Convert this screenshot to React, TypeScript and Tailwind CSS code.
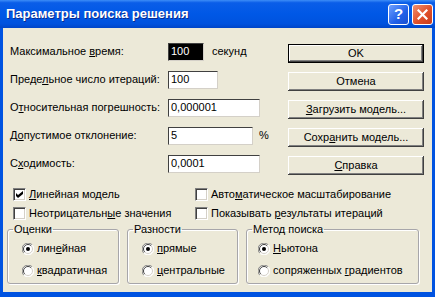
import React from "react";

const U = ({ c }: { c: string }) => <span className="underline underline-offset-[1px]">{c}</span>;

function Check({ checked }: { checked?: boolean }) {
  return (
    <span className="w-[13px] h-[13px] shrink-0 bg-white border-t border-l border-[#808080] border-r border-b border-r-white border-b-white shadow-[inset_1px_1px_0_#404040,inset_-1px_-1px_0_#D4D0C8] flex items-center justify-center">
      {checked && (
        <svg width="7" height="7" viewBox="0 0 7 7">
          <path d="M0 2 L2 4 L7 0 L7 3 L2 7 L0 5 Z" fill="#000" />
        </svg>
      )}
    </span>
  );
}

function Radio({ on }: { on?: boolean }) {
  return (
    <svg width="12" height="12" viewBox="0 0 12 12" className="shrink-0">
      <circle cx="6" cy="6" r="5.5" fill="#fff" />
      <path d="M10.2 1.8 A5.5 5.5 0 0 0 1.8 10.2" stroke="#808080" fill="none" />
      <path d="M9.2 2.8 A4.5 4.5 0 0 0 2.8 9.2" stroke="#404040" fill="none" />
      <path d="M1.8 10.2 A5.5 5.5 0 0 0 10.2 1.8" stroke="#fff" fill="none" />
      <path d="M2.8 9.2 A4.5 4.5 0 0 0 9.2 2.8" stroke="#D4D0C8" fill="none" />
      {on && <circle cx="6" cy="6" r="2" fill="#000" />}
    </svg>
  );
}

function Box({ w, children, selected }: { w: string; children: React.ReactNode; selected?: boolean }) {
  return (
    <div
      className={`${w} h-[18px] border-t border-l border-[#404040] border-r border-b border-r-[#D4D0C8] border-b-[#D4D0C8] flex items-center pl-[2px] ${
        selected ? "bg-black text-white" : "bg-white"
      }`}
    >
      {children}
    </div>
  );
}

function Btn({ children, def }: { children: React.ReactNode; def?: boolean }) {
  return (
    <div
      className={`h-[19px] w-[136px] flex items-center justify-center bg-[#ECE9D8] ${
        def
          ? "border border-black shadow-[inset_-1px_-1px_0_#404040,inset_1px_1px_0_#fff,inset_-2px_-2px_0_#808080]"
          : "shadow-[inset_-1px_-1px_0_#404040,inset_1px_1px_0_#fff,inset_-2px_-2px_0_#808080]"
      }`}
    >
      {children}
    </div>
  );
}

function Row({ label, children }: { label: React.ReactNode; children: React.ReactNode }) {
  return (
    <div className="flex items-center h-[19px]">
      <div className="w-[158px] shrink-0">{label}</div>
      {children}
    </div>
  );
}

function Opt({ on, children }: { on?: boolean; children: React.ReactNode }) {
  return (
    <div className="flex items-center gap-[3px] h-[13px]">
      <Radio on={on} />
      <span>{children}</span>
    </div>
  );
}

function Group({ title, w, pl, children }: { title: string; w: string; pl: string; children: React.ReactNode }) {
  return (
    <fieldset className={`${w} border border-[#A7A6AA] rounded-[3px] shadow-[inset_1px_1px_0_#fff,1px_1px_0_#fff] px-0`}>
      <legend className="ml-[5px] px-[1px] leading-[13px]">{title}</legend>
      <div className={`${pl} pt-[6px] pb-[6px] flex flex-col gap-[9px]`}>{children}</div>
    </fieldset>
  );
}

export default function App() {
  return (
    <div className="w-[435px] h-[297px] flex flex-col bg-[#0053E1] font-['Liberation_Sans',Arial,sans-serif] text-[11px] text-black overflow-hidden">
      <div className="h-[28px] shrink-0 flex items-center bg-[linear-gradient(to_bottom,#3D8DF7_0%,#0A5DE8_10%,#0058E6_50%,#0052DE_85%,#0045C8_100%)] pl-[6px] pr-[2px]">
        <div className="flex-1 text-white font-bold text-[13px] [text-shadow:1px_1px_0_#0B2C8F]">
          Параметры поиска решения
        </div>
        <div className="flex gap-[3px]">
          <div className="w-[21px] h-[21px] rounded-[3px] border border-white bg-[linear-gradient(135deg,#6FA0FF,#2160E8_60%,#1A4FD0)] flex items-center justify-center text-white font-bold text-[15px]">
            ?
          </div>
          <div className="w-[21px] h-[21px] rounded-[3px] border border-white bg-[linear-gradient(135deg,#F09070,#E0502A_55%,#C83C1C)] flex items-center justify-center">
            <svg width="11" height="11" viewBox="0 0 11 11">
              <path d="M1.5 1.5 L9.5 9.5 M9.5 1.5 L1.5 9.5" stroke="#fff" strokeWidth="2.2" strokeLinecap="square" />
            </svg>
          </div>
        </div>
      </div>
      <div className="flex-1 bg-[#ECE9D8] mx-[3px] mb-[5px] flex flex-col">
        <div className="flex">
          <div className="w-[285px] shrink-0 flex flex-col gap-[9px] pt-[14px] pl-[7px]">
            <Row label={<>Максимальное <U c="в" />ремя:</>}>
              <Box w="w-[36px]" selected>100</Box>
              <span className="ml-[8px]">секунд</span>
            </Row>
            <Row label={<>Преде<U c="л" />ьное число итераций:</>}>
              <Box w="w-[50px]">100</Box>
            </Row>
            <Row label={<>О<U c="т" />носительная погрешность:</>}>
              <Box w="w-[92px]">0,000001</Box>
            </Row>
            <Row label={<>Д<U c="о" />пустимое отклонение:</>}>
              <Box w="w-[85px]">5</Box>
              <span className="ml-[6px]">%</span>
            </Row>
            <Row label={<>С<U c="х" />одимость:</>}>
              <Box w="w-[92px]">0,0001</Box>
            </Row>
          </div>
          <div className="flex flex-col gap-[9px] pt-[16px]">
            <Btn def>OK</Btn>
            <Btn>Отмена</Btn>
            <Btn>
              <span><U c="З" />агрузить модель...</span>
            </Btn>
            <Btn>
              <span>Сохр<U c="а" />нить модель...</span>
            </Btn>
            <Btn>
              <span><U c="С" />правка</span>
            </Btn>
          </div>
        </div>
        <div className="grid grid-cols-[182px_1fr] gap-y-[6px] pl-[10px] mt-[13px]">
          <div className="flex items-center gap-[3px] h-[13px]">
            <Check checked />
            <span><U c="Л" />инейная модель</span>
          </div>
          <div className="flex items-center gap-[3px] h-[13px]">
            <Check />
            <span>Авто<U c="м" />атическое масштабирование</span>
          </div>
          <div className="flex items-center gap-[3px] h-[13px]">
            <Check />
            <span>Неотрицательн<U c="ы" />е значения</span>
          </div>
          <div className="flex items-center gap-[3px] h-[13px]">
            <Check />
            <span>Показывать <U c="р" />езультаты итераций</span>
          </div>
        </div>
        <div className="flex gap-[8px] pl-[4px] mt-[3px]">
          <Group title="Оценки" w="w-[112px]" pl="pl-[14px]">
            <Opt on>лин<U c="е" />йная</Opt>
            <Opt><U c="к" />вадратичная</Opt>
          </Group>
          <Group title="Разности" w="w-[111px]" pl="pl-[14px]">
            <Opt on><U c="п" />рямые</Opt>
            <Opt><U c="ц" />ентральные</Opt>
          </Group>
          <Group title="Метод поиска" w="w-[173px]" pl="pl-[11px]">
            <Opt on><U c="Н" />ьютона</Opt>
            <Opt>сопряженных <U c="г" />радиентов</Opt>
          </Group>
        </div>
      </div>
    </div>
  );
}
